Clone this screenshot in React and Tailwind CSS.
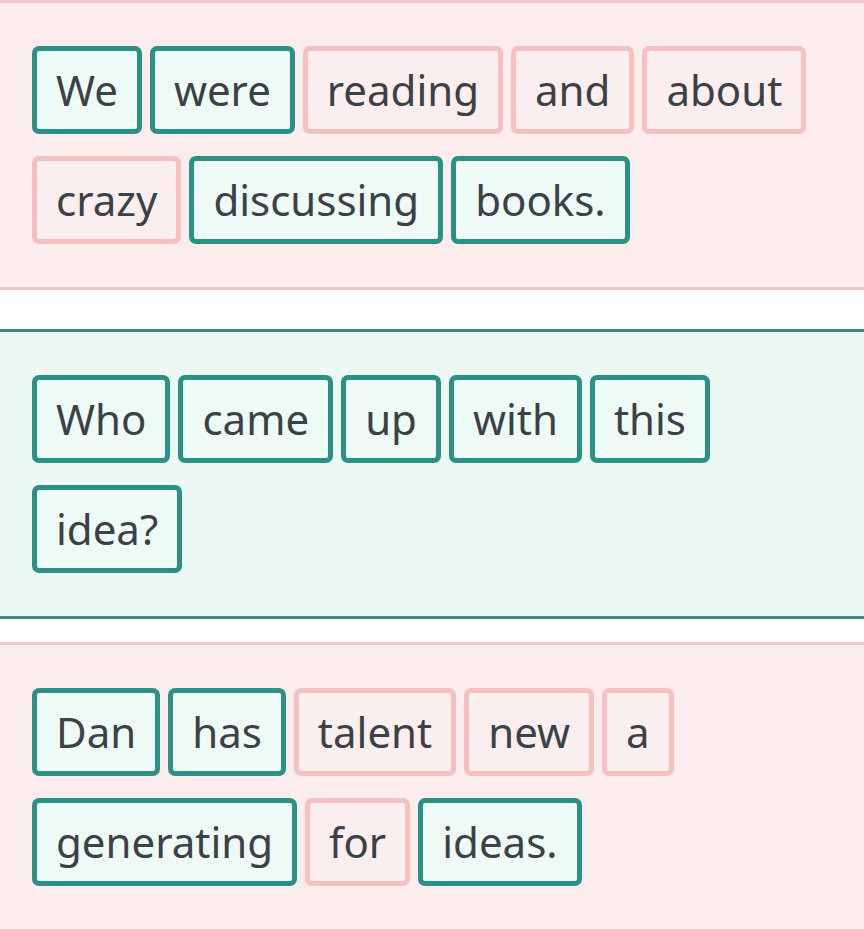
import React from 'react';

const rows = [
  {
    tone: 'pink',
    words: [
      ['We', true], ['were', true], ['reading', false], ['and', false], ['about', false],
      ['crazy', false], ['discussing', true], ['books.', true],
    ],
  },
  {
    tone: 'green',
    words: [
      ['Who', true], ['came', true], ['up', true], ['with', true], ['this', true], ['idea?', true],
    ],
  },
  {
    tone: 'pink',
    words: [
      ['Dan', true], ['has', true], ['talent', false], ['new', false], ['a', false],
      ['generating', true], ['for', false], ['ideas.', true],
    ],
  },
];

function Word({ text, ok }) {
  return (
    <div
      className={
        ok
          ? 'border-[5px] border-[#2b9184] bg-[#eefaf5] rounded-[7px] px-[19px] py-[11px] text-[42px] leading-[56px]'
          : 'border-[5px] border-[#f4c0c0] bg-[#fbeeee] rounded-[7px] px-[19px] py-[11px] text-[42px] leading-[56px]'
      }
    >
      {text}
    </div>
  );
}

export default function App() {
  return (
    <div className="w-[864px] h-[929px] overflow-hidden bg-white text-[#3c4047]" style={{ fontFamily: '"Noto Sans", "Open Sans", sans-serif' }}>
      {rows.map((row, i) => (
        <div key={i} className={i === 0 ? '' : i === 1 ? 'mt-[39px]' : 'mt-[23px]'}>
          <div
            className={
              row.tone === 'pink'
                ? 'bg-[#fbeded] border-y-[3px] border-[#f0c6c6] pl-8 pr-4 py-[43px]'
                : 'bg-[#edfaf3] border-y-[3px] border-[#3a8c84] pl-8 pr-4 py-[43px]'
            }
          >
            <div className="flex flex-wrap gap-x-[8px] gap-y-[22px] w-[800px]">
              {row.words.map(([w, ok], j) => (
                <Word key={j} text={w} ok={ok} />
              ))}
            </div>
          </div>
        </div>
      ))}
    </div>
  );
}
